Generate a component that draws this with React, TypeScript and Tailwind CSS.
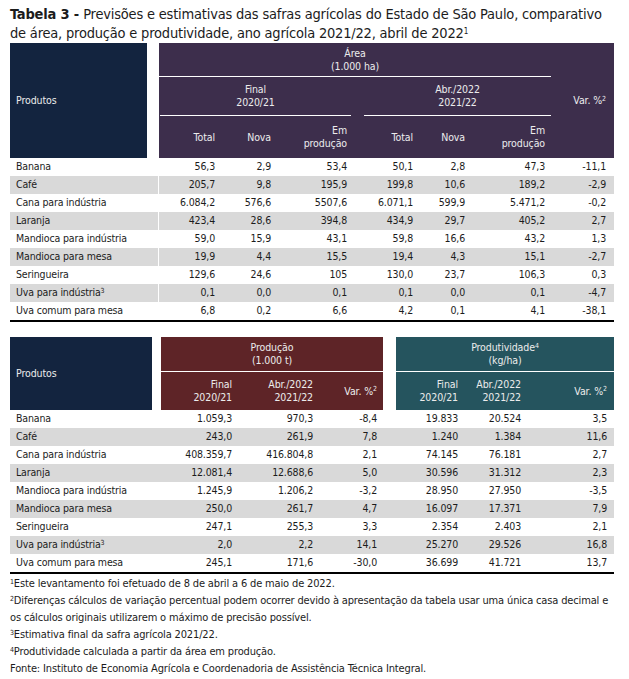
const font = { fontFamily: '"DejaVu Sans Condensed", "DejaVu Sans", sans-serif' }

const area: string[][] = [
  ["Banana", "56,3", "2,9", "53,4", "50,1", "2,8", "47,3", "-11,1"],
  ["Café", "205,7", "9,8", "195,9", "199,8", "10,6", "189,2", "-2,9"],
  ["Cana para indústria", "6.084,2", "576,6", "5507,6", "6.071,1", "599,9", "5.471,2", "-0,2"],
  ["Laranja", "423,4", "28,6", "394,8", "434,9", "29,7", "405,2", "2,7"],
  ["Mandioca para indústria", "59,0", "15,9", "43,1", "59,8", "16,6", "43,2", "1,3"],
  ["Mandioca para mesa", "19,9", "4,4", "15,5", "19,4", "4,3", "15,1", "-2,7"],
  ["Seringueira", "129,6", "24,6", "105", "130,0", "23,7", "106,3", "0,3"],
  ["Uva para indústria|3", "0,1", "0,0", "0,1", "0,1", "0,0", "0,1", "-4,7"],
  ["Uva comum para mesa", "6,8", "0,2", "6,6", "4,2", "0,1", "4,1", "-38,1"],
]

const prod: string[][] = [
  ["Banana", "1.059,3", "970,3", "-8,4", "19.833", "20.524", "3,5"],
  ["Café", "243,0", "261,9", "7,8", "1.240", "1.384", "11,6"],
  ["Cana para indústria", "408.359,7", "416.804,8", "2,1", "74.145", "76.181", "2,7"],
  ["Laranja", "12.081,4", "12.688,6", "5,0", "30.596", "31.312", "2,3"],
  ["Mandioca para indústria", "1.245,9", "1.206,2", "-3,2", "28.950", "27.950", "-3,5"],
  ["Mandioca para mesa", "250,0", "261,7", "4,7", "16.097", "17.371", "7,9"],
  ["Seringueira", "247,1", "255,3", "3,3", "2.354", "2.403", "2,1"],
  ["Uva para indústria|3", "2,0", "2,2", "14,1", "25.270", "29.526", "16,8"],
  ["Uva comum para mesa", "245,1", "171,6", "-30,0", "36.699", "41.721", "13,7"],
]

function Label({ text }: { text: string }) {
  const [name, sup] = text.split("|")
  return (
    <span>
      {name}
      {sup && <sup className="text-[7px]">{sup}</sup>}
    </span>
  )
}

function Var() {
  return (
    <span>
      Var. %<sup className="text-[7px]">2</sup>
    </span>
  )
}

function AreaTable() {
  return (
    <div className="w-[604px]">
      <div className="flex h-[115px] text-[10.5px] leading-[13px] tracking-[-0.1px] text-[#ececec]">
        <div className="w-[137px] bg-[#13243f] flex items-center pl-[6px]">Produtos</div>
        <div className="ml-[12px] w-[455px] bg-[#3d2e4c] grid grid-cols-[62px_56px_76px_66px_52px_80px_63px] grid-rows-[34px_39px_42px]">
          <div className="col-span-6 border-b border-white flex flex-col items-center justify-center">
            <span>Área</span>
            <span>(1.000 ha)</span>
          </div>
          <div className="row-span-3 flex items-center justify-end pr-[8px]">
            <Var />
          </div>
          <div className="col-span-3 flex flex-col items-center justify-center border-b border-white mr-[2px] ml-px">
            <span>Final</span>
            <span>2020/21</span>
          </div>
          <div className="col-span-3 flex flex-col items-center justify-center border-b border-white ml-[11px]">
            <span>Abr./2022</span>
            <span>2021/22</span>
          </div>
          {["Total", "Nova", "Em|produção", "Total", "Nova", "Em|produção"].map((h, i) => (
            <div key={i} className="flex flex-col items-end justify-center pr-[6px] text-right">
              {h.split("|").map((p) => (
                <span key={p}>{p}</span>
              ))}
            </div>
          ))}
        </div>
      </div>
      <div className="text-[10.5px] tracking-[-0.15px] text-[#1c1c1c]">
        {area.map((r, i) => (
          <div
            key={i}
            className={`grid grid-cols-[149px_62px_56px_76px_66px_52px_80px_63px] h-[18px] items-center ${i % 2 === 1 ? "bg-[#d9d9d9]" : ""}`}
          >
            <div className={`pl-[6px] h-full flex items-center whitespace-nowrap ${i % 2 === 1 ? "border-r border-white" : ""}`}>
              <Label text={r[0]} />
            </div>
            {r.slice(1).map((v, j) => (
              <div key={j} className={`text-right ${j === 6 ? "pr-[8px]" : "pr-[6px]"}`}>
                {v}
              </div>
            ))}
          </div>
        ))}
      </div>
      <div className="h-[2px] bg-black" />
    </div>
  )
}

function ProdTable() {
  return (
    <div className="w-[604px] mt-[15px]">
      <div className="flex h-[73px] text-[10.5px] leading-[13px] tracking-[-0.1px] text-[#ececec]">
        <div className="w-[142px] bg-[#13243f] flex items-center pl-[6px]">Produtos</div>
        <div className="ml-[9px] w-[222px] bg-[#5e2427] grid grid-cols-[77px_81px_64px] grid-rows-[35px_38px]">
          <div className="col-span-3 border-b border-white flex flex-col items-center justify-center">
            <span>Produção</span>
            <span>(1.000 t)</span>
          </div>
          <div className="flex flex-col items-end justify-center pr-[6px]">
            <span>Final</span>
            <span>2020/21</span>
          </div>
          <div className="flex flex-col items-end justify-center pr-[6px]">
            <span>Abr./2022</span>
            <span>2021/22</span>
          </div>
          <div className="flex items-center justify-end pr-[6px]">
            <Var />
          </div>
        </div>
        <div className="ml-[13px] w-[218px] bg-[#25545e] grid grid-cols-[68px_63px_87px] grid-rows-[35px_38px]">
          <div className="col-span-3 border-b border-white flex flex-col items-center justify-center">
            <span>
              Produtividade<sup className="text-[7px]">4</sup>
            </span>
            <span>(kg/ha)</span>
          </div>
          <div className="flex flex-col items-end justify-center pr-[6px]">
            <span>Final</span>
            <span>2020/21</span>
          </div>
          <div className="flex flex-col items-end justify-center pr-[6px]">
            <span>Abr./2022</span>
            <span>2021/22</span>
          </div>
          <div className="flex items-center justify-end pr-[7px]">
            <Var />
          </div>
        </div>
      </div>
      <div className="text-[10.5px] tracking-[-0.15px] text-[#1c1c1c]">
        {prod.map((r, i) => (
          <div
            key={i}
            className={`grid grid-cols-[151px_77px_81px_64px_13px_68px_63px_87px] h-[18px] items-center ${i % 2 === 1 ? "bg-[#d9d9d9]" : ""}`}
          >
            <div className="pl-[6px] whitespace-nowrap">
              <Label text={r[0]} />
            </div>
            <div className="text-right pr-[6px]">{r[1]}</div>
            <div className="text-right pr-[6px]">{r[2]}</div>
            <div className="text-right pr-[6px]">{r[3]}</div>
            <div />
            <div className="text-right pr-[6px]">{r[4]}</div>
            <div className="text-right pr-[6px]">{r[5]}</div>
            <div className="text-right pr-[7px]">{r[6]}</div>
          </div>
        ))}
      </div>
      <div className="h-[2px] bg-black" />
    </div>
  )
}

export default function App() {
  return (
    <div className="w-[629px] h-[679px] overflow-hidden bg-white px-[10px] pt-[5px] text-[#1c1c1c]" style={font}>
      <h1 className="text-[14.5px] leading-[19px] tracking-[-0.2px] mb-0 whitespace-nowrap">
        <b>Tabela 3 - </b>Previsões e estimativas das safras agrícolas do Estado de São Paulo, comparativo
        <br />
        de área, produção e produtividade, ano agrícola 2021/22, abril de 2022<sup className="text-[8px]">1</sup>
      </h1>
      <AreaTable />
      <ProdTable />
      <div className="text-[11px] leading-[17px] tracking-[-0.15px] mt-[1px] whitespace-nowrap">
        <p>
          <sup className="text-[7px]">1</sup>Este levantamento foi efetuado de 8 de abril a 6 de maio de 2022.
        </p>
        <p>
          <sup className="text-[7px]">2</sup>Diferenças cálculos de variação percentual podem ocorrer devido à apresentação da tabela usar uma única casa decimal e
          <br />
          os cálculos originais utilizarem o máximo de precisão possível.
        </p>
        <p>
          <sup className="text-[7px]">3</sup>Estimativa final da safra agrícola 2021/22.
        </p>
        <p>
          <sup className="text-[7px]">4</sup>Produtividade calculada a partir da área em produção.
        </p>
        <p>Fonte: Instituto de Economia Agrícola e Coordenadoria de Assistência Técnica Integral.</p>
      </div>
    </div>
  )
}
